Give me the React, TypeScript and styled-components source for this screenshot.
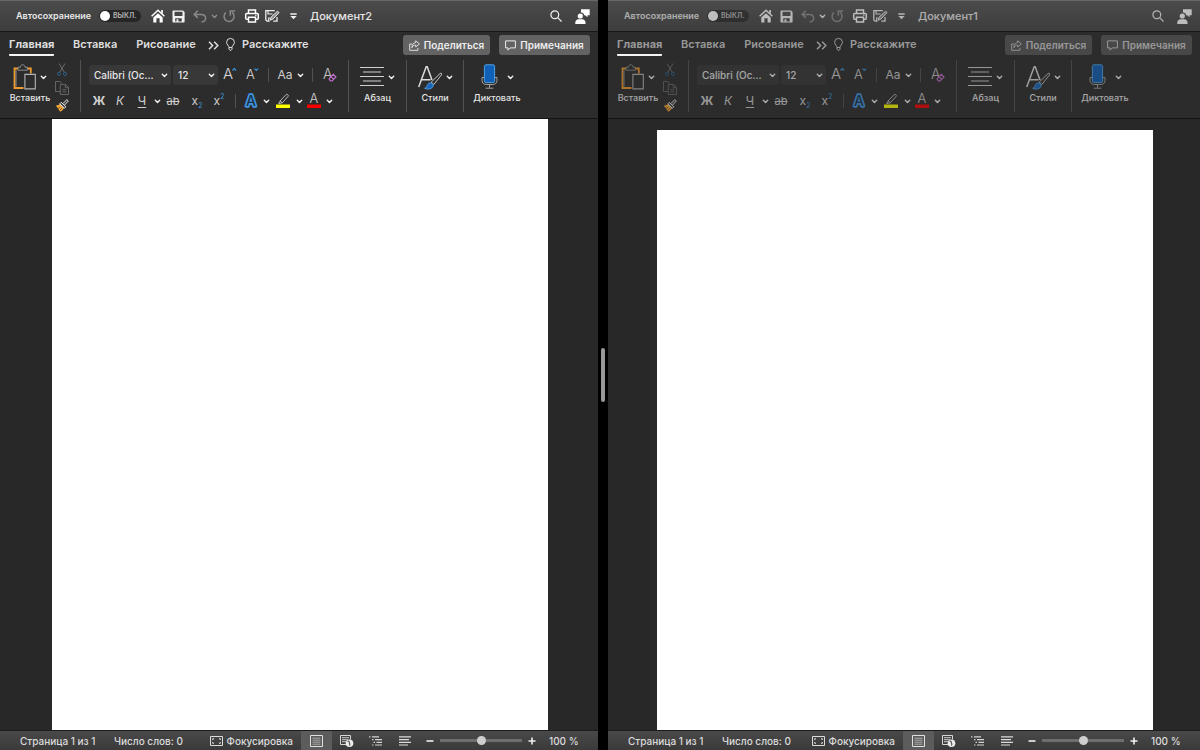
import React from "react";
import styled, { createGlobalStyle, css } from "styled-components";

const GlobalStyle = createGlobalStyle`
  * { box-sizing: border-box; }
  body { margin: 0; background: #000; }
  button, select, input { font: inherit; color: inherit; margin: 0; }
  svg { display: block; flex: none; overflow: visible; }
`;

const Screen = styled.main`
  display: grid;
  grid-template-columns: 598fr 10px 592fr;
  height: 100vh;
  overflow: hidden;
  background: #000;
  color: #e6e6e6;
  font-family: Inter, "Noto Sans", sans-serif;
  font-size: 11px;
`;

const Splitter = styled.div`
  display: flex;
  align-items: center;
  justify-content: center;
`;

const Grip = styled.span`
  width: 4px;
  height: 54px;
  border-radius: 2px;
  background: #989898;
`;

const Pane = styled.section`
  display: flex;
  flex-direction: column;
  min-width: 0;
  overflow: hidden;
  background: #282828;
`;

const dimmable = css<{ $dim: boolean }>`
  opacity: ${(p) => (p.$dim ? 0.65 : 1)};
`;

const TitleBar = styled.header`
  flex: none;
  height: 32px;
  border-top: 1px solid #686868;
  border-bottom: 1px solid #161616;
  background: linear-gradient(#4b4b4b, #3d3d3d);
`;

const TitleContent = styled.div<{ $dim: boolean }>`
  display: flex;
  align-items: center;
  height: 100%;
  padding: 0 8px 0 16px;
  ${dimmable}
`;

const AutoSave = styled.label`
  display: flex;
  align-items: center;
  font-size: 9px;
  font-weight: 600;
  line-height: 12px;
  white-space: nowrap;
`;

const AutoSaveName = styled.span`
  width: 83px;
`;

const Toggle = styled.span`
  position: relative;
  display: flex;
  align-items: center;
  width: 42px;
  height: 12px;
  padding-left: 14px;
  border-radius: 6px;
  background: #262626;
  color: #b8b8b8;
  font-size: 7px;
`;

const ToggleInput = styled.input`
  appearance: none;
  position: absolute;
  left: 1px;
  top: 1px;
  width: 10px;
  height: 10px;
  border-radius: 50%;
  background: #fff;
`;

const Slot = styled.button<{ $w: number; $faded?: boolean }>`
  display: flex;
  flex: none;
  align-items: center;
  justify-content: center;
  width: ${(p) => p.$w}px;
  height: 20px;
  padding: 0;
  border: 0;
  background: none;
  line-height: 20px;
  opacity: ${(p) => (p.$faded ? 0.4 : 1)};
`;

const QuickTools = styled.div`
  display: flex;
  align-items: center;
  margin-left: 6px;
`;

const DocTitle = styled.h1`
  margin: 0 auto 0 6px;
  font-size: 11px;
  font-weight: 500;
  line-height: 16px;
`;

const Ribbon = styled.div`
  flex: none;
  border-bottom: 1px solid #141414;
  background: #2c2c2c;
`;

const TabBar = styled.nav<{ $dim: boolean }>`
  display: flex;
  align-items: center;
  height: 26px;
  padding: 0 8px 0 9px;
  font-weight: 600;
  color: ${(p) => (p.$dim ? "#989898" : "#dedede")};
`;

const Tabs = styled.div`
  display: flex;
  gap: 19px;
  margin-right: 11px;
`;

const Tab = styled.button<{ $active?: boolean; $w: number }>`
  width: ${(p) => p.$w}px;
  height: 22px;
  padding: 0;
  border: 0;
  border-bottom: 2px solid ${(p) => (p.$active ? "#f4f4f4" : "transparent")};
  border-radius: 1px;
  background: none;
  line-height: 16px;
  white-space: nowrap;
  font-weight: ${(p) => (p.$active ? 700 : 600)};
`;

const TellMe = styled.button`
  display: flex;
  align-items: center;
  gap: 7px;
  height: 22px;
  margin: 0 auto 0 7px;
  padding: 0 0 2px;
  border: 0;
  background: none;
  line-height: 16px;
`;

const ActionButton = styled.button<{ $dim: boolean; $w: number }>`
  display: flex;
  flex: none;
  align-items: center;
  justify-content: center;
  gap: 4px;
  width: ${(p) => p.$w}px;
  height: 20px;
  margin-left: 9px;
  padding: 0;
  border: 0;
  border-radius: 3px;
  background: ${(p) => (p.$dim ? "#484848" : "#636363")};
  color: ${(p) => (p.$dim ? "#989898" : "#ececec")};
  font-size: 10px;
`;

const Tools = styled.div<{ $dim: boolean }>`
  display: flex;
  height: 60px;
  padding: 2px 0 6px 8px;
  ${dimmable}
`;

const Rule = styled.span<{ $h: number }>`
  flex: none;
  width: 1px;
  height: ${(p) => p.$h}px;
  background: #515151;
`;

const RuleSlot = styled.span<{ $w: number }>`
  display: flex;
  flex: none;
  justify-content: center;
  width: ${(p) => p.$w}px;
`;

const BigButton = styled.button<{ $w: number }>`
  display: flex;
  flex: none;
  flex-direction: column;
  align-items: center;
  gap: 2px;
  width: ${(p) => p.$w}px;
  padding: 4px 0 0;
  border: 0;
  background: none;
  font-size: 9px;
  font-weight: 500;
  line-height: 12px;
  white-space: nowrap;
`;

const BigIcon = styled.span<{ $gap?: number }>`
  display: flex;
  align-items: center;
  gap: ${(p) => p.$gap ?? 3}px;
  height: 26px;
`;

const Clipboard = styled.div`
  display: flex;
  flex-direction: column;
  align-items: center;
  justify-content: space-between;
  width: 20px;
  height: 52px;
  margin-right: 8px;
  padding-top: 3px;
`;

const ClipButton = styled.button`
  padding: 0;
  border: 0;
  background: none;
`;

const FontGroup = styled.div`
  display: flex;
  flex-direction: column;
  gap: 6px;
  width: 267px;
  padding: 5px 8px 0;
`;

const Row = styled.div`
  display: flex;
  align-items: center;
  height: 20px;
`;

const Combo = styled.label<{ $w: number }>`
  position: relative;
  display: block;
  flex: none;
  width: ${(p) => p.$w}px;
  height: 20px;
  & + & { margin-left: 2px; }
  svg { position: absolute; right: 3px; top: 8px; }
`;

const ComboSelect = styled.select`
  appearance: none;
  width: 100%;
  height: 20px;
  padding: 0 0 0 5px;
  border: 0;
  border-radius: 3px;
  background: #383838;
  font-size: 10px;
  font-weight: 500;
`;

const Letter = styled.span<{ $bold?: boolean; $italic?: boolean; $line?: string; $size?: number }>`
  font-size: ${(p) => p.$size ?? 12}px;
  font-weight: ${(p) => (p.$bold ? 700 : 400)};
  font-style: ${(p) => (p.$italic ? "italic" : "normal")};
  text-decoration: ${(p) => p.$line ?? "none"};
  text-underline-offset: 2px;
  color: #cfcfcf;
`;

const Script = styled.span<{ $raised?: boolean }>`
  align-self: ${(p) => (p.$raised ? "flex-start" : "flex-end")};
  color: #3a96dd;
  font-size: 7px;
  line-height: ${(p) => (p.$raised ? 12 : 10)}px;
`;

const Canvas = styled.div`
  display: flex;
  flex: 1;
  justify-content: center;
  min-height: 0;
  padding-left: 2px;
`;

const Sheet = styled.article<{ $top: number }>`
  width: 496px;
  margin-top: ${(p) => p.$top}px;
  background: #fff;
`;

const StatusBar = styled.footer`
  display: flex;
  flex: none;
  align-items: center;
  height: 20px;
  padding: 0 19px 0 20px;
  border-top: 1px solid #1c1c1c;
  background: linear-gradient(#494949, #3a3a3a);
  color: #dcdcdc;
  font-size: 10px;
  font-weight: 500;
  line-height: 18px;
  white-space: nowrap;
`;

const Stat = styled.span<{ $w: number }>`
  width: ${(p) => p.$w}px;
`;

const Focus = styled.button`
  display: flex;
  align-items: center;
  gap: 4px;
  margin: 0 8px 0 auto;
  padding: 0;
  border: 0;
  background: none;
`;

const ViewButton = styled.button<{ $active?: boolean }>`
  display: flex;
  align-items: center;
  justify-content: center;
  width: ${(p) => (p.$active ? 31 : 29)}px;
  height: 19px;
  padding: 0;
  border: 0;
  background: ${(p) => (p.$active ? "#5c5c5c" : "none")};
`;

const ZoomControls = styled.div`
  display: flex;
  align-items: center;
  margin-left: 5px;
`;

const ZoomRange = styled.input`
  appearance: none;
  width: 82px;
  height: 10px;
  margin: 0 4px;
  background: linear-gradient(#6e6e6e, #6e6e6e) center / 100% 3px no-repeat;
  &::-webkit-slider-thumb {
    appearance: none;
    width: 9px;
    height: 9px;
    border-radius: 50%;
    background: #cfcfcf;
  }
`;

const ZoomValue = styled.output`
  width: 30px;
  margin-left: 11px;
`;

const Chevron = () => (
  <svg width="7" height="5" viewBox="0 0 7 5" fill="none" stroke="#f0f0f0" strokeWidth="1.4" strokeLinecap="round" strokeLinejoin="round">
    <path d="M1.300 1.200 3.500 3.500 5.700 1.200" />
  </svg>
);

const HomeIcon = () => (
  <svg width="14" height="14" viewBox="0 0 14 14">
    <path d="M.6 7.300 7 1.300 13.400 7.300" fill="none" stroke="#fff" strokeWidth="1.500" />
    <path d="M10.200 1h1.700v4l-1.700-1.500zM2.300 8.500 7 4.300l4.700 4.200v4.900H8.600V9.300H5.400v4.100H2.300z" fill="#fff" />
  </svg>
);

const SaveIcon = () => (
  <svg width="13" height="13" viewBox="0 0 13 13">
    <path fill="#f2f2f2" fillRule="evenodd" d="M1.300.5H11L12.600 2v9.700c0 .5-.3.8-.8.8H1.300c-.5 0-.8-.3-.8-.8V1.300c0-.5.3-.8.8-.8zM2.500 1.700v4.400h8V1.700zM3.200 8.200v3.200h1.300V9.300h1.900v2.100h3.300V8.200z" />
  </svg>
);

const UndoIcon = () => (
  <svg width="14" height="13" viewBox="0 0 14 13" fill="none" stroke="#f0f0f0" strokeWidth="1.500">
    <path d="M4.800.8 1.200 4.400l3.600 3.500M1.400 4.400h6.900c2.600 0 4.300 1.500 4.300 3.800 0 2.100-1.500 3.500-4.100 3.900" />
  </svg>
);

const RedoIcon = () => (
  <svg width="13" height="13" viewBox="0 0 13 13" fill="none" stroke="#f0f0f0" strokeWidth="1.500">
    <path d="M2.800 2.600a5 5 0 1 0 6.300-.2M7.300 5.700V1h4.800" />
  </svg>
);

const PrintIcon = () => (
  <svg width="14" height="14" viewBox="0 0 14 14" fill="none" stroke="#fff" strokeWidth="1.500">
    <path d="M3.500 4.300V1h7v3.300M3.300 10.200H1.700c-.6 0-1-.4-1-1V5.500c0-.6.4-1 1-1h10.600c.6 0 1 .4 1 1v3.700c0 .6-.4 1-1 1h-1.600M3.500 8.200h7V13h-7z" />
    <path d="M10 6.300h1.600" strokeWidth="1" />
  </svg>
);

const EditIcon = () => (
  <svg width="15" height="14" viewBox="0 0 15 14" fill="none" stroke="#eee" strokeWidth="1.300">
    <path d="M9.800 1.700H.8v9.200l1.300 1.300h2.500M12 8v4.200H8.300" />
    <path d="M3 2v3h4.500M3.600 12V9h1.600" strokeWidth="1.100" />
    <path d="m5.200 11.200.9-3.100 6.100-5.600c.6-.6 2.100.8 1.500 1.500L8 10z" fill="#8a8a8a" strokeWidth="1" />
  </svg>
);

const MoreIcon = () => (
  <svg width="7" height="7" viewBox="0 0 7 7" fill="#f0f0f0">
    <path d="M.3.300h6.400v1.400H.3zM.3 2.900h6.400L3.500 6.300z" />
  </svg>
);

const SearchIcon = () => (
  <svg width="12" height="12" viewBox="0 0 12 12" fill="none" stroke="#f0f0f0" strokeWidth="1.200">
    <circle cx="4.800" cy="4.800" r="3.900" />
    <path d="m7.700 7.700 3.800 3.800" />
  </svg>
);

const PersonIcon = () => (
  <svg width="15" height="15" viewBox="0 0 15 15" fill="#fff">
    <path d="M6 .3h8.700v6h-2.200v2L10.200 6.300H9.100A3.200 3.200 0 0 0 6 3.500z" />
    <circle cx="5.300" cy="7" r="2.600" />
    <path d="M.3 15v-1.500c0-1.900 1.400-3.200 3.200-3.200h3.800c1.800 0 3.200 1.300 3.200 3.200V15z" />
  </svg>
);

const MoreTabsIcon = () => (
  <svg width="11" height="9" viewBox="0 0 11 9" fill="none" stroke="currentColor" strokeWidth="1.500">
    <path d="m1 .8 3.600 3.700L1 8.200M6.200.8l3.600 3.700-3.600 3.700" />
  </svg>
);

const BulbIcon = () => (
  <svg width="9" height="13" viewBox="0 0 9 13" fill="none" stroke="currentColor" strokeWidth="1">
    <path d="M3 9.500C3 7.500.6 6.800.6 4.300a3.900 3.900 0 0 1 7.800 0C8.400 6.800 6 7.500 6 9.500zM3 9.500v1.700L4 12.400h1l1-1.200V9.500" />
  </svg>
);

const ShareIcon = () => (
  <svg width="11" height="11" viewBox="0 0 11 11" fill="none" stroke="currentColor" strokeWidth=".9">
    <path d="M3 4H.7v6.300h8.200V7.800M6.700.8l3.700 3.100-3.700 3V5.200C5 5.100 3.700 5.900 2.900 7.700c0-3 1.400-4.900 3.800-5.100z" />
  </svg>
);

const CommentIcon = () => (
  <svg width="11" height="11" viewBox="0 0 11 11" fill="none" stroke="currentColor" strokeWidth="1">
    <path d="M.6.900h9.800v7H5.200L3 10.200V7.900H.6z" />
  </svg>
);

const PasteIcon = () => (
  <svg width="24" height="26" viewBox="0 0 24 26" fill="none">
    <path d="M5 4.500H1.500V24h9M14 4.500h3.800v5" stroke="#f09a2c" strokeWidth="1.800" />
    <path d="M5 6.200V3.300h2.400C7.400 1.600 8.300.8 9.700.8s2.300.8 2.300 2.500h2.400v2.900zM3 6v16.500" stroke="#8f8f8f" strokeWidth="1" />
    <path d="M11.900 10.400h10.400v14.500H11.900z" fill="#2c2c2c" stroke="#b4b4b4" strokeWidth="1.100" />
  </svg>
);

const CutIcon = () => (
  <svg width="10" height="13" viewBox="0 0 10 13" fill="none" strokeWidth="1">
    <path d="m2 .5 5.300 8.700M8 .5 2.700 9.200" stroke="#6c6c6c" />
    <circle cx="2" cy="10.800" r="1.600" stroke="#2d5f86" />
    <circle cx="8" cy="10.800" r="1.600" stroke="#2d5f86" />
  </svg>
);

const CopyIcon = () => (
  <svg width="14" height="14" viewBox="0 0 14 14" fill="#2c2c2c" stroke="#646464" strokeWidth="1">
    <path d="M5 10.500H.5V.5h4.200l2.300 2M5.300 3.500h5.200l3 3v7H5.300zM10.300 3.700v3h3M7.300 8.700h4M7.300 10.900h4" />
  </svg>
);

const BrushIcon = () => (
  <svg width="14" height="13" viewBox="0 0 14 13">
    <path d="M.8 6.400c1.700.1 3-.3 4.200-1.300l4 4c-1 1.800-2 2.900-3.700 3.700z" fill="#f3a93c" />
    <path d="m3 9.600 2.300-1.500M5 11l2.200-1.800" stroke="#5c3d0d" strokeWidth=".7" />
    <path d="m4.800 4.800 1.500-1.500 4.600 4.500-1.500 1.500zM8 4.500 11.800.6l1.500 1.500-3.700 3.900" fill="#444" stroke="#e2e2e2" strokeWidth="1" />
  </svg>
);

const SizeIcon = ({ grow }: { grow?: boolean }) => (
  <svg width="14" height="16" viewBox="0 0 14 16" fill="none">
    <text x={grow ? 0 : 1} y="12" fontSize={grow ? 15 : 13} fontWeight="300" fill="#d8d8d8">A</text>
    <path d={grow ? "m9.500 3.500 1.800-1.800L13.100 3.500" : "m9.500 1.700 1.800 1.800 1.800-1.800"} stroke="#3a96dd" strokeWidth="1.200" />
  </svg>
);

const EraseIcon = () => (
  <svg width="14" height="16" viewBox="0 0 14 16">
    <text x="0" y="12" fontSize="14" fontWeight="300" fill="#c4c4c4">A</text>
    <path d="m6.300 11.400 4-4.100 2.700 2.700-4 4H7.700l-1.400-1.300zM8 9.700l2.700 2.700" fill="#2c2c2c" stroke="#c56fd0" strokeWidth="1.200" />
  </svg>
);

const OutlineIcon = () => (
  <svg width="14" height="16" viewBox="0 0 14 16">
    <text x="2" y="13" fontSize="14" fontWeight="500" fill="none" stroke="#3f97e6" strokeWidth="3.400" strokeLinejoin="round">A</text>
    <text x="2" y="13" fontSize="14" fontWeight="500" fill="#1d3145">A</text>
  </svg>
);

const MarkerIcon = () => (
  <svg width="14" height="16" viewBox="0 0 14 16">
    <path d="m4 8 6.200-6.500c.8-.8 2.700.8 2 1.700L6.500 9.700zM4 8l-1.300 2.700L6.500 9.700" fill="none" stroke="#b8b8b8" strokeWidth="1" />
    <path d="M0 11.500h14v3.500H0z" fill="#ffff00" />
  </svg>
);

const ColorIcon = () => (
  <svg width="14" height="16" viewBox="0 0 14 16">
    <text x="2.500" y="10" fontSize="13" fontWeight="300" fill="#d0d0d0">A</text>
    <path d="M0 11.500h14v3.500H0z" fill="#f80000" />
  </svg>
);

const ParagraphIcon = () => (
  <svg width="24" height="20" viewBox="0 0 24 20" stroke="#cfcfcf" strokeWidth="1.200">
    <path d="M0 .5h24M3 5h18M0 9.500h24M3 14h18M0 18.500h24" />
  </svg>
);

const StylesIcon = () => (
  <svg width="25" height="26" viewBox="0 0 25 26" fill="none">
    <path d="M.7 23 8.200 2.800h1L14 16M3.600 15.800h9" stroke="#dcdcdc" strokeWidth="1.500" />
    <path d="M13.200 18.200 22 9.600c1.100-1 2.300 0 1.500 1.300l-7.700 9.600z" fill="#2c2c2c" stroke="#c8c8c8" strokeWidth="1" />
    <path d="M6.700 24.300c2.300-.3 2-2.200 3.200-4.100 1.600-2.500 6-1.100 5.200 1.900-.8 2.900-5.400 3.700-8.400 2.200z" fill="#1766bd" stroke="#55a3e6" strokeWidth=".9" />
  </svg>
);

const MicIcon = () => (
  <svg width="17" height="26" viewBox="0 0 17 26" fill="none">
    <path d="M3.500 13.500H1v2.800c0 2.600 1.600 4.200 4.200 4.200h6.600c2.600 0 4.200-1.600 4.200-4.200v-2.800h-2.500M8.500 20.500v3.300M4.700 24.200h7.600" stroke="#a2a2a2" strokeWidth="1" />
    <rect x="3.400" y=".8" width="10.200" height="17.800" rx="1.500" fill="#1160b7" stroke="#4ea0e4" />
  </svg>
);

const FocusIcon = () => (
  <svg width="13" height="10" viewBox="0 0 13 10" fill="none" stroke="#dcdcdc" strokeWidth="1">
    <path d="M.5.5h12v9H.5zM2.700 4V2.700H4M9 2.700h1.300V4M10.300 6v1.300H9M4 7.300H2.700V6" />
  </svg>
);

const PrintLayoutIcon = () => (
  <svg width="13" height="12" viewBox="0 0 13 12" fill="none" stroke="#e0e0e0">
    <path d="M.5.5h12v11H.5z" />
    <path d="M2.500 3.200h8M2.500 5.200h8M2.500 7.200h8M2.500 9.200h8" strokeWidth=".8" opacity=".75" />
  </svg>
);

const WebLayoutIcon = () => (
  <svg width="13" height="12" viewBox="0 0 13 12" fill="none" stroke="#d8d8d8">
    <path d="M6 9.500H.5v-9h10v4" />
    <path d="M2 2.700h7M2 4.700h6M2 6.700h4" strokeWidth=".9" />
    <circle cx="9.500" cy="8.300" r="3.800" fill="#ececec" stroke="none" />
    <path d="M7.600 6.300c1.200-.4 1.900.2 1.600 1.100-.2.700.8.900.6 1.900l-.3 1.300" stroke="#4a4a4a" strokeWidth="1.100" />
  </svg>
);

const OutlineViewIcon = () => (
  <svg width="13" height="10" viewBox="0 0 13 10" stroke="#d4d4d4" strokeWidth="1.200">
    <path d="M0 .9h1.500M3 .9h7M3 3.600h1.500M6 3.600h7M4.500 6.300H6M7.500 6.300H13M3 9h1.500M6 9h7" />
  </svg>
);

const DraftIcon = () => (
  <svg width="12" height="10" viewBox="0 0 12 10" stroke="#dcdcdc" strokeWidth="1.200">
    <path d="M0 .9h12M0 3.600h10M0 6.300h12M0 9h9" />
  </svg>
);

const SignIcon = ({ plus }: { plus?: boolean }) => (
  <svg width="8" height="8" viewBox="0 0 8 8" stroke="#f0f0f0" strokeWidth="1.600">
    <path d={plus ? "M.5 4h7M4 .5v7" : "M.5 4h7"} />
  </svg>
);

type WordWindowProps = { title: string; inactive?: boolean; sheetTop?: number };

function WordWindow({ title, inactive = false, sheetTop = 0 }: WordWindowProps) {
  return (
    <Pane aria-label={title}>
      <TitleBar>
        <TitleContent $dim={inactive}>
          <AutoSave>
            <AutoSaveName>Автосохранение</AutoSaveName>
            <Toggle>
              <ToggleInput type="checkbox" role="switch" />
              ВЫКЛ.
            </Toggle>
          </AutoSave>
          <QuickTools>
            <Slot $w={21} aria-label="Домой"><HomeIcon /></Slot>
            <Slot $w={21} aria-label="Сохранить"><SaveIcon /></Slot>
            <Slot $w={21} $faded aria-label="Отменить"><UndoIcon /></Slot>
            <Slot $w={8} $faded={!inactive} aria-label="Список отмены"><Chevron /></Slot>
            <Slot $w={23} $faded aria-label="Повторить"><RedoIcon /></Slot>
            <Slot $w={21} aria-label="Печать"><PrintIcon /></Slot>
            <Slot $w={21} aria-label="Правка"><EditIcon /></Slot>
            <Slot $w={21} aria-label="Ещё"><MoreIcon /></Slot>
          </QuickTools>
          <DocTitle>{title}</DocTitle>
          <Slot $w={38} aria-label="Поиск"><SearchIcon /></Slot>
          <Slot $w={15} aria-label="Пользователь"><PersonIcon /></Slot>
        </TitleContent>
      </TitleBar>

      <Ribbon>
        <TabBar $dim={inactive}>
          <Tabs>
            <Tab $active $w={45}>Главная</Tab>
            <Tab $w={44}>Вставка</Tab>
            <Tab $w={60}>Рисование</Tab>
          </Tabs>
          <Slot $w={12} aria-label="Другие вкладки"><MoreTabsIcon /></Slot>
          <TellMe><BulbIcon />Расскажите</TellMe>
          <ActionButton $dim={inactive} $w={87}><ShareIcon />Поделиться</ActionButton>
          <ActionButton $dim={inactive} $w={91}><CommentIcon />Примечания</ActionButton>
        </TabBar>

        <Tools $dim={inactive}>
          <BigButton $w={44}>
            <BigIcon><PasteIcon /><Chevron /></BigIcon>
            Вставить
          </BigButton>
          <Clipboard>
            <ClipButton aria-label="Вырезать"><CutIcon /></ClipButton>
            <ClipButton aria-label="Копировать"><CopyIcon /></ClipButton>
            <ClipButton aria-label="Формат по образцу"><BrushIcon /></ClipButton>
          </Clipboard>
          <Rule $h={52} />
          <FontGroup>
            <Row>
              <Combo $w={82}>
                <ComboSelect aria-label="Шрифт"><option>Calibri (Ос...</option></ComboSelect>
                <Chevron />
              </Combo>
              <Combo $w={45}>
                <ComboSelect aria-label="Размер шрифта"><option>12</option></ComboSelect>
                <Chevron />
              </Combo>
              <Slot $w={24} aria-label="Увеличить шрифт"><SizeIcon grow /></Slot>
              <Slot $w={20} aria-label="Уменьшить шрифт"><SizeIcon /></Slot>
              <RuleSlot $w={12}><Rule $h={14} /></RuleSlot>
              <Slot $w={22}><Letter>Aa</Letter></Slot>
              <Slot $w={8} aria-label="Регистр"><Chevron /></Slot>
              <RuleSlot $w={16}><Rule $h={14} /></RuleSlot>
              <Slot $w={20} aria-label="Очистить формат"><EraseIcon /></Slot>
            </Row>
            <Row>
              <Slot $w={20}><Letter $bold>Ж</Letter></Slot>
              <Slot $w={22}><Letter $italic>К</Letter></Slot>
              <Slot $w={22}><Letter $line="underline">Ч</Letter></Slot>
              <Slot $w={8} aria-label="Вид подчёркивания"><Chevron /></Slot>
              <Slot $w={24}><Letter $line="line-through" $size={11}>ab</Letter></Slot>
              <Slot $w={24}><Letter>x</Letter><Script>2</Script></Slot>
              <Slot $w={20}><Letter>x</Letter><Script $raised>2</Script></Slot>
              <RuleSlot $w={12}><Rule $h={14} /></RuleSlot>
              <Slot $w={20} aria-label="Текстовые эффекты"><OutlineIcon /></Slot>
              <Slot $w={10} aria-label="Список эффектов"><Chevron /></Slot>
              <Slot $w={24} aria-label="Цвет выделения"><MarkerIcon /></Slot>
              <Slot $w={8} aria-label="Список цветов выделения"><Chevron /></Slot>
              <Slot $w={22} aria-label="Цвет шрифта"><ColorIcon /></Slot>
              <Slot $w={8} aria-label="Список цветов шрифта"><Chevron /></Slot>
            </Row>
          </FontGroup>
          <Rule $h={52} />
          <BigButton $w={57}>
            <BigIcon $gap={4}><ParagraphIcon /><Chevron /></BigIcon>
            Абзац
          </BigButton>
          <Rule $h={52} />
          <BigButton $w={56}>
            <BigIcon><StylesIcon /><Chevron /></BigIcon>
            Стили
          </BigButton>
          <Rule $h={52} />
          <BigButton $w={66}>
            <BigIcon $gap={9}><MicIcon /><Chevron /></BigIcon>
            Диктовать
          </BigButton>
        </Tools>
      </Ribbon>

      <Canvas>
        <Sheet $top={sheetTop} />
      </Canvas>

      <StatusBar>
        <Stat $w={94}>Страница 1 из 1</Stat>
        <Stat $w={70}>Число слов: 0</Stat>
        <Focus><FocusIcon />Фокусировка</Focus>
        <ViewButton $active aria-label="Разметка страницы"><PrintLayoutIcon /></ViewButton>
        <ViewButton aria-label="Веб-документ"><WebLayoutIcon /></ViewButton>
        <ViewButton aria-label="Структура"><OutlineViewIcon /></ViewButton>
        <ViewButton aria-label="Черновик"><DraftIcon /></ViewButton>
        <ZoomControls>
          <Slot $w={12} aria-label="Уменьшить"><SignIcon /></Slot>
          <ZoomRange type="range" defaultValue={50} aria-label="Масштаб" />
          <Slot $w={12} aria-label="Увеличить"><SignIcon plus /></Slot>
          <ZoomValue>100 %</ZoomValue>
        </ZoomControls>
      </StatusBar>
    </Pane>
  );
}

export default function App() {
  return (
    <>
      <GlobalStyle />
      <Screen>
        <WordWindow title="Документ2" />
        <Splitter><Grip /></Splitter>
        <WordWindow title="Документ1" inactive sheetTop={11} />
      </Screen>
    </>
  );
}
